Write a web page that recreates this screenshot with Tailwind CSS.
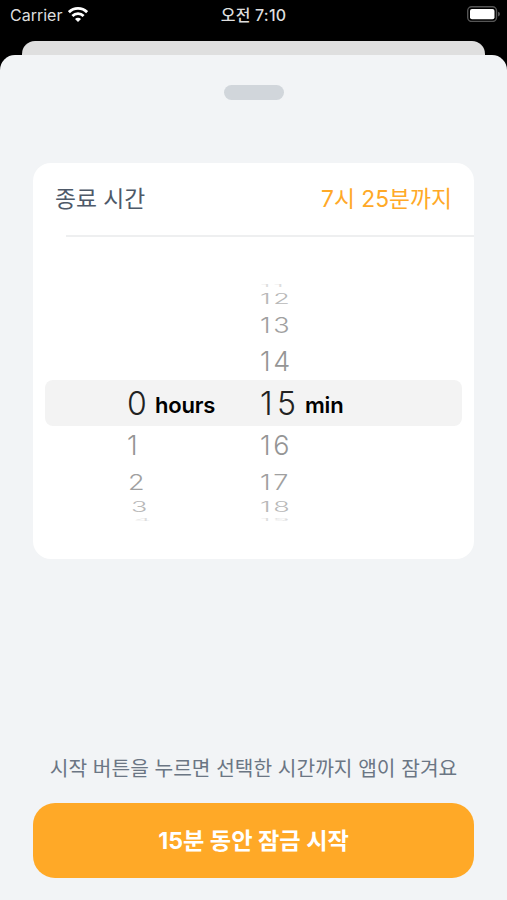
<!DOCTYPE html>
<html lang="ko">
  <head>
    <meta charset="UTF-8" />
    <meta name="viewport" content="width=device-width, initial-scale=1.0" />
    <title>잠금 시작</title>
    <script src="https://cdn.jsdelivr.net/npm/@tailwindcss/browser@4"></script>
  </head>

  <body class="bg-black">
    <div
      class="flex flex-col h-[900px] w-full overflow-hidden font-['Inter','Noto_Sans_CJK_KR',sans-serif]"
    >
      <!-- Status bar -->
      <header
        class="grid grid-cols-3 items-start h-[41px] shrink-0 pt-[3px] pl-[7px] pr-[7px] text-[#dedede]"
      >
        <div class="flex items-center gap-[6px] h-6 pl-[3px]">
          <span class="text-[16px]">Carrier</span>
          <svg class="w-5 h-[15px] -mt-[1px]" viewBox="0 0 20 15" fill="none" stroke="#fff" stroke-width="2.8">
            <path d="M.9 5.2a12.9 12.9 0 0 1 18.2 0" />
            <path d="M4.4 8.9a7.9 7.9 0 0 1 11.2 0" />
            <path d="M10 15 7 12a4.2 4.2 0 0 1 6 0z" fill="#fff" stroke="none" />
          </svg>
        </div>
        <div class="h-6 leading-6 text-center text-[16px] font-medium tracking-[0.2px] whitespace-nowrap">오전 7:10</div>
        <div class="flex justify-end pt-[3px]">
          <svg class="w-[33px] h-4" viewBox="0 0 33 16">
            <rect x="0.7" y="0.7" width="28.8" height="14.8" rx="4" fill="none" stroke="#555" stroke-width="1.4" />
            <rect x="3" y="3" width="24.5" height="10.2" rx="2" fill="#fff" />
            <path d="M31 5.8q2 .5 2 2.3t-2 2.3z" fill="#555" />
          </svg>
        </div>
      </header>

      <!-- Screen behind the sheet -->
      <div class="h-[14px] mx-[22px] shrink-0 rounded-t-[13px] bg-[#dfdfdf]"></div>

      <!-- Sheet -->
      <main class="flex flex-col grow rounded-t-[15px] bg-[#f2f4f6] px-[33px] pb-[22px]">
        <div class="mt-[30px] h-[15px] w-[60px] shrink-0 self-center rounded-full bg-[#d1d6db]"></div>

        <section class="mt-[63px] h-[396px] shrink-0 rounded-[18px] bg-white">
          <div class="flex items-center justify-between h-[72px] pl-[22px] pr-[22px]">
            <h1 class="text-[22.8px] text-[#4e5968]">종료 시간</h1>
            <p class="text-[22.8px] text-[#ffa927]">7시 25분까지</p>
          </div>
          <div class="ml-[33px] h-[2px] bg-[#eeeff0]"></div>

          <!-- Time picker -->
          <div class="pt-[43px] text-[27px] text-[#aaa] tracking-[2.5px] font-light">
            <div class="grid grid-cols-[94px_133px_1fr] h-[12px] leading-[12px] overflow-hidden text-[#ddd]">
              <span class="col-start-3 scale-y-[0.12]">11</span>
            </div>
            <div class="grid grid-cols-[94px_133px_1fr] h-[15px] leading-[15px] text-[#b8b8b8]">
              <span class="col-start-3 scale-y-[0.52]">12</span>
            </div>
            <div class="grid grid-cols-[94px_133px_1fr] h-[36px] leading-[37px] text-[#a0a0a0]">
              <span class="col-start-3 scale-y-[0.8]">13</span>
            </div>
            <div class="grid grid-cols-[94px_133px_1fr] h-[37px] leading-[37px] text-[#959595]">
              <span class="col-start-3">14</span>
            </div>
            <div
              class="grid grid-cols-[82px_133px_1fr] h-[46px] leading-[48px] mx-[12px] rounded-[8px] bg-[#f3f3f3] text-black"
            >
              <div class="col-start-2 flex">
                <span class="w-[28px] text-[32px] text-[#222]">0</span>
                <span class="text-[22px] font-semibold tracking-[-0.2px] pt-[1px]">hours</span>
              </div>
              <div class="flex">
                <span class="w-[45px] text-[32px] text-[#222] tracking-[4.5px]">15</span>
                <span class="text-[22px] font-semibold tracking-[-0.2px] pt-[1px]">min</span>
              </div>
            </div>
            <div class="grid grid-cols-[94px_133px_1fr] h-[39px] leading-[40px] text-[#959595]">
              <span class="col-start-2">1</span>
              <span>16</span>
            </div>
            <div class="grid grid-cols-[94px_133px_1fr] h-[34px] leading-[35px] text-[#a0a0a0]">
              <span class="col-start-2 pl-[1px] scale-y-[0.8]">2</span>
              <span class="scale-y-[0.8]">17</span>
            </div>
            <div class="grid grid-cols-[94px_133px_1fr] h-[16px] leading-[17px] text-[#b8b8b8]">
              <span class="col-start-2 pl-[4px] scale-y-[0.52]">3</span>
              <span class="scale-y-[0.52]">18</span>
            </div>
            <div class="grid grid-cols-[94px_133px_1fr] h-[10px] leading-[10px] overflow-hidden text-[#ddd]">
              <span class="col-start-2 pl-[7px] scale-y-[0.12]">4</span>
              <span class="scale-y-[0.12]">19</span>
            </div>
          </div>
        </section>

        <!-- Bottom action -->
        <p class="mt-auto mb-[19px] h-[30px] leading-[30px] text-center whitespace-nowrap text-[20.3px] text-[#6b7684]">
          시작 버튼을 누르면 선택한 시간까지 앱이 잠겨요
        </p>
        <button class="h-[75px] shrink-0 rounded-[22px] bg-[#ffa927] pt-[2px] text-[23.2px] font-bold text-white">
          15분 동안 잠금 시작
        </button>
      </main>
    </div>
  </body>
</html>
